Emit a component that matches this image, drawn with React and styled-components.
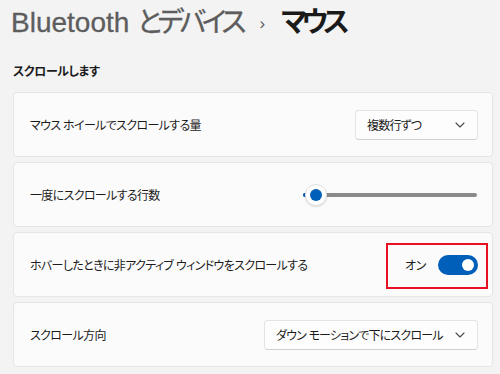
import React from 'react'
import styled, { createGlobalStyle } from 'styled-components'

const GlobalStyle = createGlobalStyle`
  html, body {
    margin: 0;
    padding: 0;
    background: #f3f3f3;
  }
  body {
    font-family: "Liberation Sans", "Noto Sans CJK JP", sans-serif;
    color: #1b1b1b;
    font-feature-settings: "palt";
  }
`

const Page = styled.div`
  width: 500px;
  height: 374px;
  overflow: hidden;
  background: #f3f3f3;
  box-sizing: border-box;
  padding: 0 7px 0 13px;
  display: flex;
  flex-direction: column;
`

const Breadcrumb = styled.div`
  display: flex;
  align-items: baseline;
  margin: 3px 0 0 -2px;
  height: 40px;
  font-size: 28px;
  line-height: 40px;
  white-space: nowrap;
`

const Parent = styled.span`
  color: #5d5d5d;
  font-weight: 400;
  -webkit-text-stroke: 0.3px #5d5d5d;
`

const Jp = styled.span`
  letter-spacing: -4.2px;
`

const Sep = styled.span`
  color: #5d5d5d;
  font-size: 17px;
  margin: 0 16px 0 17px;
  position: relative;
  top: -3px;
`

const Current = styled.span`
  color: #1a1a1a;
  font-weight: 700;
  letter-spacing: -5.2px;
`

const SectionTitle = styled.div`
  margin-top: 20px;
  font-size: 12px;
  font-weight: 600;
  line-height: 18px;
  letter-spacing: -0.4px;
`

const List = styled.div`
  margin-top: 11px;
  display: flex;
  flex-direction: column;
  gap: 5px;
`

const Card = styled.div`
  box-sizing: border-box;
  height: 65px;
  background: #fbfbfb;
  border: 1px solid #e5e5e5;
  border-radius: 4px;
  display: flex;
  align-items: center;
  justify-content: space-between;
  padding: 0 14px 0 16px;
`

const Label = styled.span`
  font-size: 12px;
  color: #1b1b1b;
  letter-spacing: -0.65px;
  white-space: nowrap;
`

const Select = styled.div`
  box-sizing: border-box;
  width: ${p => p.$w}px;
  height: 30px;
  background: #fdfdfd;
  border: 1px solid #e3e3e3;
  border-bottom-color: #d0d0d0;
  border-radius: 4px;
  display: flex;
  align-items: center;
  justify-content: space-between;
  padding: 0 12px 0 11px;
  font-size: 12px;
  letter-spacing: -0.8px;
  white-space: nowrap;
  color: #1b1b1b;
`

const Slider = styled.div`
  position: relative;
  width: 174px;
  height: 22px;
  margin-right: 1px;
  display: flex;
  align-items: center;
`

const Track = styled.div`
  flex: 1;
  height: 4px;
  border-radius: 2px;
  background: #8a8a8a;
`

const Fill = styled.div`
  position: absolute;
  left: 0;
  top: 9px;
  height: 4px;
  border-radius: 2px;
  background: #005fb8;
`

const Thumb = styled.div`
  position: absolute;
  top: 0;
  width: 22px;
  height: 22px;
  box-sizing: border-box;
  border-radius: 50%;
  background: #ffffff;
  border: 1px solid #e2e2e2;
  box-shadow: 0 1px 2px rgba(0, 0, 0, 0.12);
  display: flex;
  align-items: center;
  justify-content: center;
  &::after {
    content: "";
    width: 12px;
    height: 12px;
    border-radius: 50%;
    background: #005fb8;
  }
`

const ToggleGroup = styled.div`
  position: relative;
  display: flex;
  align-items: center;
  gap: 12px;
`

const ToggleText = styled.span`
  font-size: 12px;
  letter-spacing: -0.3px;
  color: #1b1b1b;
`

const Toggle = styled.div`
  box-sizing: border-box;
  width: 40px;
  height: 20px;
  border-radius: 10px;
  background: ${p => (p.$on ? '#005fb8' : '#ffffff')};
  display: flex;
  align-items: center;
  justify-content: ${p => (p.$on ? 'flex-end' : 'flex-start')};
  padding: 0 4px;
  &::after {
    content: "";
    width: 12px;
    height: 12px;
    border-radius: 50%;
    background: #ffffff;
  }
`

const Highlight = styled.div`
  position: absolute;
  left: -19px;
  right: -10px;
  top: -12px;
  bottom: -14px;
  border: 2px solid #e81123;
  pointer-events: none;
`

const Chevron = () => (
  <svg width="10" height="6" viewBox="0 0 10 6" fill="none">
    <path d="M1 1l4 4 4-4" stroke="#4a4a4a" strokeWidth="1.1" strokeLinecap="round" strokeLinejoin="round" />
  </svg>
)

const Dropdown = ({ value, width }) => (
  <Select $w={width}>
    <span>{value}</span>
    <Chevron />
  </Select>
)

export default function App() {
  const sliderValue = 7
  return (
    <>
      <GlobalStyle />
      <Page>
        <Breadcrumb>
          <Parent>Bluetooth <Jp>とデバイス</Jp></Parent>
          <Sep>›</Sep>
          <Current>マウス</Current>
        </Breadcrumb>
        <SectionTitle>スクロールします</SectionTitle>
        <List>
          <Card>
            <Label>マウス ホイールでスクロールする量</Label>
            <Dropdown value="複数行ずつ" width={123} />
          </Card>
          <Card>
            <Label>一度にスクロールする行数</Label>
            <Slider>
              <Track />
              <Fill style={{ width: `${sliderValue}px` }} />
              <Thumb style={{ left: `${sliderValue - 5}px` }} />
            </Slider>
          </Card>
          <Card>
            <Label>ホバーしたときに非アクティブ ウィンドウをスクロールする</Label>
            <ToggleGroup>
              <ToggleText>オン</ToggleText>
              <Toggle $on />
              <Highlight />
            </ToggleGroup>
          </Card>
          <Card>
            <Label>スクロール方向</Label>
            <Dropdown value="ダウン モーションで下にスクロール" width={214} />
          </Card>
        </List>
      </Page>
    </>
  )
}
